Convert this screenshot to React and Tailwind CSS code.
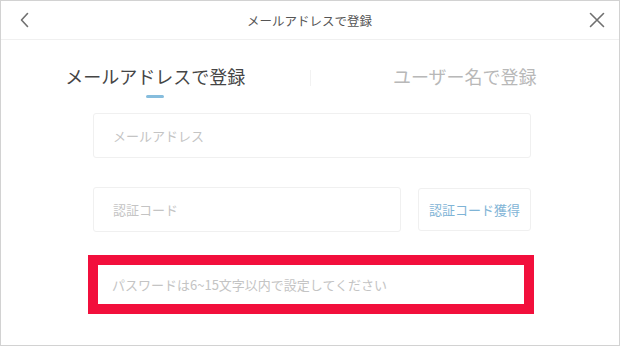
import React from "react";

const jp = { fontFamily: '"Noto Sans CJK JP", "Noto Sans", sans-serif' };

export default function App() {
  return (
    <div
      style={jp}
      className="w-[620px] h-[346px] overflow-hidden bg-white border border-[#d2d2d2] flex flex-col"
    >
      {/* header */}
      <div className="h-[39px] shrink-0 border-b border-[#f0f0f0] flex items-center justify-between pl-[18px] pr-[14px]">
        <svg width="11" height="16" viewBox="0 0 11 16" fill="none">
          <path d="M8.5 1.5 L2.5 8 L8.5 14.5" stroke="#707070" strokeWidth="1.6" strokeLinecap="round" strokeLinejoin="round" />
        </svg>
        <div className="text-[12.5px] leading-[18px] text-[#555] pt-[1px]">メールアドレスで登録</div>
        <svg width="16" height="16" viewBox="0 0 16 16" fill="none">
          <path d="M1.5 1.5 L14.5 14.5 M14.5 1.5 L1.5 14.5" stroke="#707070" strokeWidth="1.6" strokeLinecap="round" />
        </svg>
      </div>

      {/* tabs */}
      <div className="flex pt-[23px]">
        <div className="flex-1 flex flex-col items-center">
          <div className="text-[18px] leading-[26px] text-[#454545]">メールアドレスで登録</div>
          <div className="mt-[6px] w-[18px] h-[3px] rounded-full bg-[#86bddd]" />
        </div>
        <div className="w-px h-[16px] mt-[7px] bg-[#f2f2f2]" />
        <div className="flex-1 flex flex-col items-center">
          <div className="text-[18px] leading-[26px] text-[#b8b8b8]">ユーザー名で登録</div>
        </div>
      </div>

      {/* form */}
      <div className="ml-[92px] w-[438px] flex flex-col mt-[15px]">
        <div className="h-[45px] border border-[#f0f0f0] rounded-[3px] flex items-center pl-[19px] text-[13px] text-[#c4c4c4]">
          メールアドレス
        </div>

        <div className="mt-[29px] flex items-center gap-[17px]">
          <div className="w-[308px] h-[45px] border border-[#f0f0f0] rounded-[3px] flex items-center pl-[19px] text-[13px] text-[#c4c4c4]">
            認証コード
          </div>
          <div className="flex-1 h-[43px] border border-[#f0f0f0] rounded-[3px] flex items-center justify-center text-[13px] text-[#7fb4d6]">
            認証コード獲得
          </div>
        </div>

        <div className="mt-[23px] -ml-[5px] w-[446px] h-[59px] border-[10px] border-[#f20f3c] bg-white flex items-center pl-[14px] text-[13px] text-[#c4c4c4]">
          パスワードは6~15文字以内で設定してください
        </div>
      </div>
    </div>
  );
}
